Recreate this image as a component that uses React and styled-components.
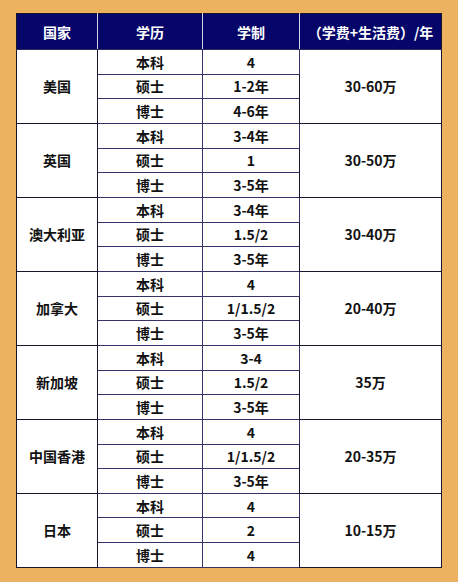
import React from "react";
import styled, { createGlobalStyle } from "styled-components";

const Global = createGlobalStyle`
  html, body { margin: 0; padding: 0; }
  body {
    background: #ecb25f;
    font-family: "Noto Sans CJK SC", "Noto Sans", sans-serif;
  }
`;

const Page = styled.div`
  width: 458px;
  height: 582px;
  box-sizing: border-box;
  padding: 13px 0 0 16px;
  background: #ecb25f;
`;

const Table = styled.table`
  border-collapse: collapse;
  table-layout: fixed;
  width: 425px;
  background: #ffffff;
  border: 1px solid #14142e;
`;

const Head = styled.th`
  height: 35px;
  padding: 0;
  background: #05056a;
  color: #ffffff;
  font-size: 14px;
  font-weight: 700;
  text-align: center;
  vertical-align: middle;
  border-right: 1px solid #d4d4ea;
  border-bottom: 1px solid #2a2a5c;
  &:last-child { border-right: none; }
`;

const Cell = styled.td`
  height: 23.67px;
  padding: 0;
  color: #111111;
  font-size: 14px;
  font-weight: 700;
  text-align: center;
  vertical-align: middle;
  line-height: 1;
  border: 1px solid ${(p) => (p.$group ? "#16162c" : "#33336a")};
`;

const data = [
  { c: "美国", y: ["4", "1-2年", "4-6年"], f: "30-60万" },
  { c: "英国", y: ["3-4年", "1", "3-5年"], f: "30-50万" },
  { c: "澳大利亚", y: ["3-4年", "1.5/2", "3-5年"], f: "30-40万" },
  { c: "加拿大", y: ["4", "1/1.5/2", "3-5年"], f: "20-40万" },
  { c: "新加坡", y: ["3-4", "1.5/2", "3-5年"], f: "35万" },
  { c: "中国香港", y: ["4", "1/1.5/2", "3-5年"], f: "20-35万" },
  { c: "日本", y: ["4", "2", "4"], f: "10-15万" },
];

const degrees = ["本科", "硕士", "博士"];

export default function App() {
  return (
    <>
      <Global />
      <Page>
        <Table>
          <colgroup>
            <col style={{ width: 81 }} />
            <col style={{ width: 105 }} />
            <col style={{ width: 97 }} />
            <col style={{ width: 142 }} />
          </colgroup>
          <thead>
            <tr>
              <Head>国家</Head>
              <Head>学历</Head>
              <Head>学制</Head>
              <Head>（学费+生活费）/年</Head>
            </tr>
          </thead>
          <tbody>
            {data.map((g) =>
              degrees.map((d, i) => (
                <tr key={g.c + d}>
                  {i === 0 && (
                    <Cell rowSpan={3} $group>
                      {g.c}
                    </Cell>
                  )}
                  <Cell>{d}</Cell>
                  <Cell>{g.y[i]}</Cell>
                  {i === 0 && (
                    <Cell rowSpan={3} $group>
                      {g.f}
                    </Cell>
                  )}
                </tr>
              ))
            )}
          </tbody>
        </Table>
      </Page>
    </>
  );
}
